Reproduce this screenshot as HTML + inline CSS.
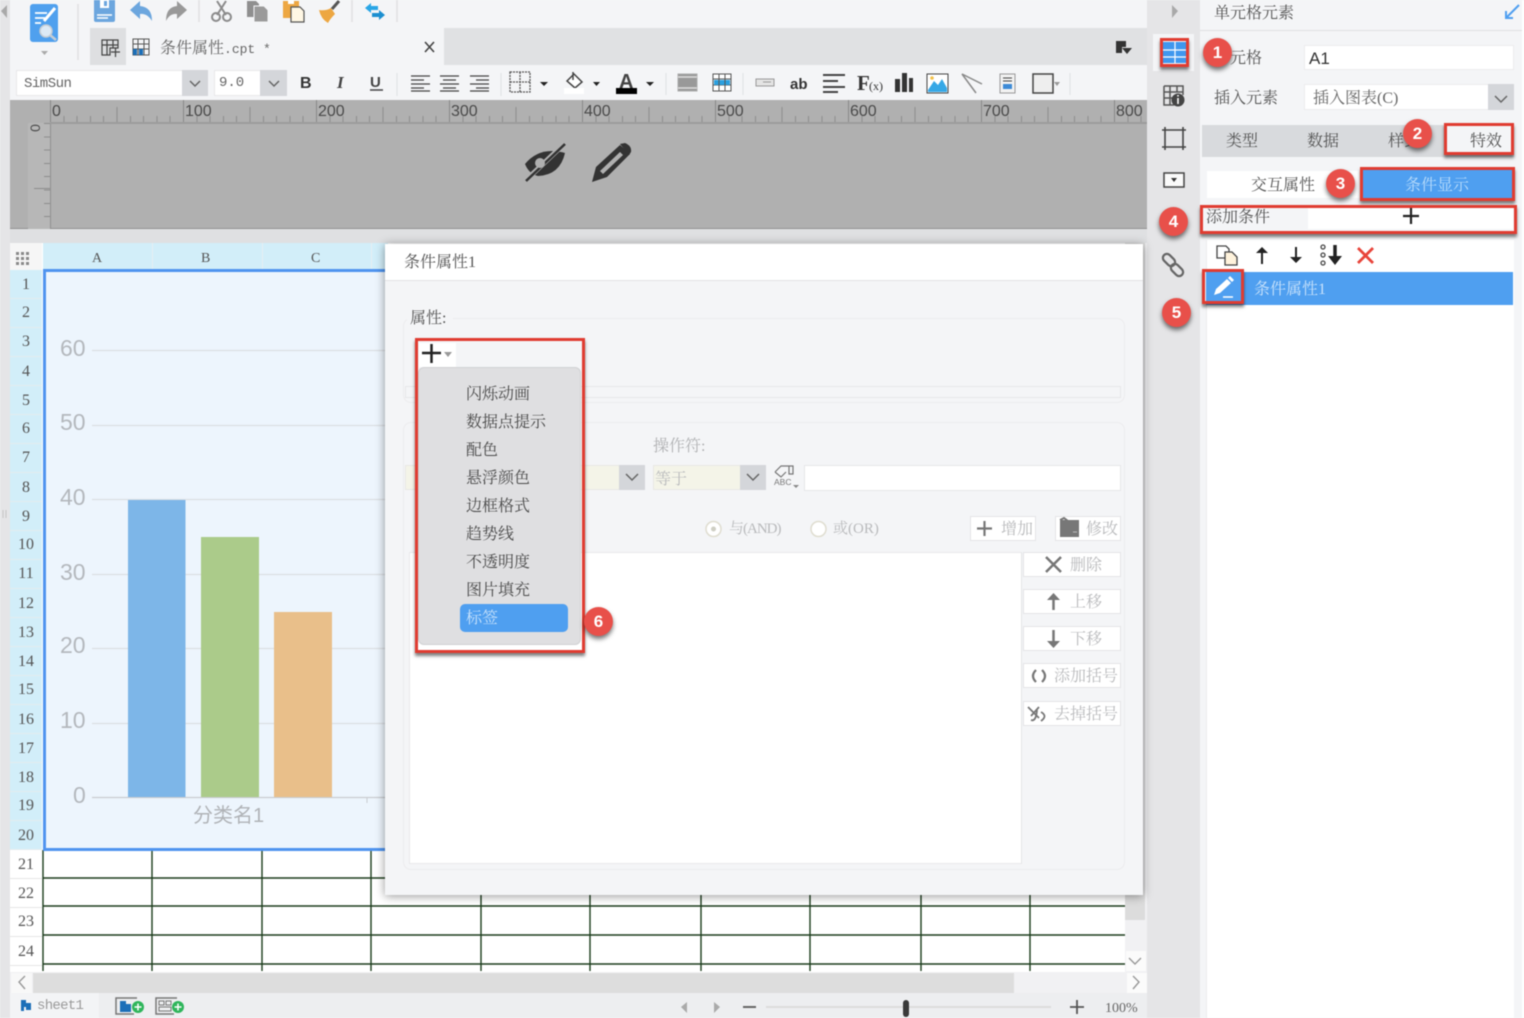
<!DOCTYPE html>
<html lang="zh"><head><meta charset="utf-8"><title>条件属性</title>
<style>
html,body{margin:0;padding:0;background:#f4f5f7;}
#root{position:relative;width:1524px;height:1018px;overflow:hidden;background:#f4f5f7;font-family:"Liberation Serif","Noto Serif CJK SC",serif;color:#555;filter:blur(.45px);}
#root div{position:absolute;box-sizing:border-box;}
.t{white-space:nowrap;line-height:1;font-size:16px;margin-top:2px;}
.m{font-family:"Liberation Mono","Noto Serif CJK SC",monospace;}
.s{font-family:"Liberation Sans",sans-serif;}
.rh{left:10px;width:32px;text-align:center;font-size:16px;line-height:1;color:#555;margin-top:1px;}
.ch{top:250px;font-size:14px;line-height:1;color:#555;margin-top:2px;}
.rl{font-family:"Liberation Sans",sans-serif;font-size:16px;line-height:1;color:#4a4a4a;top:103px;margin-top:1px;}
.yl{left:60px;font-family:"Liberation Sans",sans-serif;font-size:23px;line-height:1;color:#b4b8bd;}
.red{border:3px solid #e03c31;box-shadow:0 3px 3px rgba(0,0,0,.5);}
.bd{width:29px;height:29px;border-radius:50%;background:#e8504a;color:#fff;font:bold 17px/29px "Liberation Sans",sans-serif;text-align:center;box-shadow:0 3px 5px rgba(0,0,0,.55);}
.btn{background:#fff;border:1px solid #e4e4e6;}
.g{color:#b9babc;}
.mi{left:466px;font-size:16px;line-height:1;color:#4a4a4a;white-space:nowrap;margin-top:2px;}
svg{position:absolute;left:0;top:0;}
</style></head><body>
<div id="root">

<!-- left strip -->
<div style="left:0;top:0;width:10px;height:1018px;background:#e5e5e7"></div>

<!-- tab row -->
<div style="left:90px;top:28px;width:1057px;height:37px;background:#e0e1e3"></div>
<div style="left:90px;top:28px;width:36px;height:37px;background:#dedfe1"></div>
<div style="left:126px;top:28px;width:318px;height:37px;background:#f4f5f7"></div>
<div class="t" style="left:160px;top:39px;font-size:16px;color:#666">条件属性<span class="m" style="font-size:13px">.cpt *</span></div>

<!-- format row -->
<div style="left:16px;top:70px;width:192px;height:26px;background:#fff;border:1px solid #e8e8ea"></div>
<div style="left:182px;top:70px;width:26px;height:26px;background:#d4d6da"></div>
<div class="t m" style="left:24px;top:75px;font-size:14px;letter-spacing:-.5px;color:#666">SimSun</div>
<div style="left:214px;top:70px;width:73px;height:26px;background:#fff;border:1px solid #e8e8ea"></div>
<div style="left:260px;top:70px;width:27px;height:26px;background:#d4d6da"></div>
<div class="t m" style="left:219px;top:74px;font-size:14px;color:#666">9.0</div>

<!-- design area -->
<div style="left:10px;top:100px;width:1137px;height:129px;background:#b0b0b0;border-bottom:1px solid #929292"></div>
<div style="left:28px;top:123px;width:22px;height:106px;background:#b7b7b7"></div>
<div style="left:50px;top:100px;width:1px;height:129px;background:#909090"></div>
<div style="left:50px;top:122px;width:1097px;height:2px;background:#9c9c9c"></div>
<div style="left:50px;top:116px;width:1097px;height:6px;background:repeating-linear-gradient(90deg,#8d8d8d 0 1px,transparent 1px 13.3px)"></div>
<div style="left:50px;top:107px;width:1097px;height:15px;background:repeating-linear-gradient(90deg,#8d8d8d 0 1px,transparent 1px 66.5px)"></div>
<div style="left:50px;top:100px;width:1097px;height:22px;background:repeating-linear-gradient(90deg,#888 0 1px,transparent 1px 133px)"></div>
<div style="left:44px;top:123px;width:6px;height:106px;background:repeating-linear-gradient(180deg,#8d8d8d 0 1px,transparent 1px 13.3px)"></div>
<div style="left:34px;top:188px;width:16px;height:1px;background:#8d8d8d"></div>
<div class="rl" style="left:52px">0</div><div class="rl" style="left:185px">100</div><div class="rl" style="left:318px">200</div><div class="rl" style="left:451px">300</div><div class="rl" style="left:584px">400</div><div class="rl" style="left:717px">500</div><div class="rl" style="left:850px">600</div><div class="rl" style="left:983px">700</div><div class="rl" style="left:1116px">800</div>
<div class="t s" style="left:31px;top:119px;font-size:14px;color:#4a4a4a;transform:rotate(-90deg)">0</div>

<div style="left:10px;top:229px;width:1137px;height:14px;background:#dfe0e2"></div>

<!-- sheet -->
<div style="left:10px;top:243px;width:1115px;height:729px;background:#fff"></div>
<div style="left:10px;top:243px;width:32px;height:27px;background:#f6f6f6"></div>
<div style="left:43px;top:243px;width:345px;height:27px;background:#d2eef9"></div>
<div style="left:152px;top:243px;width:1px;height:27px;background:#e6eef2"></div>
<div style="left:262px;top:243px;width:1px;height:27px;background:#e6eef2"></div>
<div style="left:371px;top:243px;width:1px;height:27px;background:#e6eef2"></div>
<div style="left:10px;top:270px;width:32px;height:580px;background:repeating-linear-gradient(180deg,#d2eef9 0 28px,#e4ecef 28px 29px)"></div>
<div style="left:10px;top:850px;width:32px;height:122px;background:repeating-linear-gradient(180deg,#fff 0 28px,#e6e6e6 28px 29px)"></div>
<div class="ch" style="left:92px">A</div><div class="ch" style="left:201px">B</div><div class="ch" style="left:311px">C</div>

<div class="rh" style="top:276px">1</div><div class="rh" style="top:304px">2</div><div class="rh" style="top:333px">3</div><div class="rh" style="top:363px">4</div><div class="rh" style="top:392px">5</div><div class="rh" style="top:420px">6</div><div class="rh" style="top:449px">7</div><div class="rh" style="top:479px">8</div><div class="rh" style="top:508px">9</div><div class="rh" style="top:536px">10</div><div class="rh" style="top:565px">11</div><div class="rh" style="top:595px">12</div><div class="rh" style="top:624px">13</div><div class="rh" style="top:653px">14</div><div class="rh" style="top:681px">15</div><div class="rh" style="top:711px">16</div><div class="rh" style="top:740px">17</div><div class="rh" style="top:769px">18</div><div class="rh" style="top:797px">19</div><div class="rh" style="top:827px">20</div><div class="rh" style="top:856px">21</div><div class="rh" style="top:885px">22</div><div class="rh" style="top:913px">23</div><div class="rh" style="top:943px">24</div>

<!-- grid lines -->
<svg width="1524" height="1018" fill="none" stroke="#1c3c1c" stroke-width="1.400">
<path d="M43 850V971M152 850V971M262 850V971M371 850V971M481 850V971M590 850V971M701 850V971M810 850V971M921 850V971M1030 850V971"/>
<path d="M43 878H1125M43 906H1125M43 935H1125M43 964H1125"/>
<g fill="#8a8a8a" stroke="none"><rect x="16" y="252" width="3" height="3"/><rect x="21" y="252" width="3" height="3"/><rect x="26" y="252" width="3" height="3"/><rect x="16" y="257" width="3" height="3"/><rect x="21" y="257" width="3" height="3"/><rect x="26" y="257" width="3" height="3"/><rect x="16" y="262" width="3" height="3"/><rect x="21" y="262" width="3" height="3"/><rect x="26" y="262" width="3" height="3"/></g>
</svg>

<!-- chart -->
<div style="left:43px;top:269px;width:345px;height:582px;background:#edf5fd;border:3px solid #4f94ef"></div>
<svg width="1524" height="1018">
<path d="M92 350.500H385M92 425.500H385M92 499.500H385M92 574.500H385M92 648.500H385M92 723.500H385" stroke="#dcdfe3" stroke-width="1.200"/>
<path d="M92 797.500H385" stroke="#c9ccd0" stroke-width="1.200"/>
<path d="M367 797V803" stroke="#c9ccd0"/>
<rect x="128" y="500" width="57.500" height="297" fill="#7db6e8"/>
<rect x="201" y="537" width="58" height="260" fill="#abcb8a"/>
<rect x="274" y="612" width="58" height="185" fill="#e9bf8a"/>
</svg>
<div class="yl" style="top:337px">60</div><div class="yl" style="top:411px">50</div><div class="yl" style="top:486px">40</div><div class="yl" style="top:561px">30</div><div class="yl" style="top:634px">20</div><div class="yl" style="top:709px">10</div><div class="yl" style="left:73px;top:784px">0</div>
<div class="t" style="left:193px;top:804px;font-size:20px;font-family:'Liberation Sans','Noto Sans CJK SC',sans-serif;color:#b0b3b7">分类名1</div>

<!-- scrollbars + status -->
<div style="left:1125px;top:243px;width:22px;height:729px;background:#f1f1f3"></div>
<div style="left:1125px;top:243px;width:20px;height:677px;background:#dcdcdc"></div>
<div style="left:1126px;top:951px;width:20px;height:20px;background:#fbfbfb"></div>
<div style="left:10px;top:972px;width:1137px;height:21px;background:#f1f1f3"></div>
<div style="left:33px;top:973px;width:981px;height:20px;background:#dddddd"></div>
<div style="left:11px;top:973px;width:21px;height:20px;background:#f8f8f8"></div>
<div style="left:1127px;top:973px;width:20px;height:20px;background:#fbfbfb"></div>
<div style="left:10px;top:993px;width:1137px;height:25px;background:#edeef0"></div>
<div style="left:10px;top:993px;width:89px;height:25px;background:#f3f4f6"></div>
<div class="t m" style="left:37px;top:997px;font-size:14px;letter-spacing:-.7px;color:#9a9a9a">sheet1</div>
<div class="t" style="left:1105px;top:1000px;font-size:14px;color:#666">100%</div>
<div style="left:766px;top:1006px;width:285px;height:2px;background:#dcdcdc"></div>
<div style="left:903px;top:1000px;width:6px;height:17px;background:#3a3a3a;border-radius:3px"></div>

<!-- right icon strip -->
<div style="left:1147px;top:0;width:53px;height:1018px;background:#e5e5e7"></div>
<div style="left:1153px;top:34px;width:41px;height:37px;background:#f4f5f7"></div>

<!-- right panel -->
<div style="left:1200px;top:0;width:324px;height:1018px;background:#f4f5f7"></div>
<div style="left:1522px;top:0;width:2px;height:1018px;background:#fff"></div>
<div style="left:1200px;top:30px;width:322px;height:1px;background:#dfe0e2"></div>
<div class="t" style="left:1214px;top:4px;color:#555">单元格元素</div>
<div class="t" style="left:1230px;top:49px;color:#555">元格</div>
<div style="left:1304px;top:45px;width:210px;height:25px;background:#fff;border:1px solid #ececee"></div>
<div class="t s" style="left:1309px;top:48px;font-size:17px;color:#333">A1</div>
<div class="t" style="left:1214px;top:89px;color:#555">插入元素</div>
<div style="left:1304px;top:84px;width:210px;height:26px;background:#fff;border:1px solid #ececee"></div>
<div style="left:1488px;top:84px;width:26px;height:26px;background:#d4d6da"></div>
<div class="t" style="left:1313px;top:89px;font-size:16px;color:#666">插入图表(C)</div>
<div style="left:1202px;top:125px;width:312px;height:32px;background:#d8dadd"></div>
<div style="left:1446px;top:126px;width:66px;height:28px;background:#f4f5f7"></div>
<div class="t" style="left:1226px;top:132px;color:#555">类型</div>
<div class="t" style="left:1307px;top:132px;color:#555">数据</div>
<div class="t" style="left:1388px;top:132px;color:#555">样式</div>
<div class="t" style="left:1470px;top:132px;color:#555">特效</div>
<div style="left:1207px;top:171px;width:153px;height:27px;background:#fff"></div>
<div class="t" style="left:1251px;top:176px;color:#555">交互属性</div>
<div style="left:1362px;top:170px;width:151px;height:29px;background:#4f9ff0"></div>
<div class="t" style="left:1405px;top:176px;color:#b9dcfb">条件显示</div>
<div class="t" style="left:1206px;top:208px;color:#555">添加条件</div>
<div style="left:1308px;top:205px;width:205px;height:24px;background:#fff"></div>
<div style="left:1206px;top:240px;width:308px;height:778px;background:#fff;border-left:1px solid #ececee"></div>
<div style="left:1206px;top:272px;width:307px;height:33px;background:#4f9ff0"></div>
<div class="t" style="left:1254px;top:280px;color:#c8e2fb">条件属性1</div>

<div class="red" style="left:1160px;top:38px;width:29px;height:29px"></div>
<div class="red" style="left:1444px;top:123px;width:70px;height:32px"></div>
<div class="red" style="left:1360px;top:167px;width:155px;height:34px"></div>
<div class="red" style="left:1200px;top:205px;width:317px;height:29px"></div>
<div class="red" style="left:1202px;top:269px;width:42px;height:35px"></div>

<!-- dialog -->
<div style="left:385px;top:244px;width:758px;height:651px;background:#f4f5f7;box-shadow:0 1px 9px rgba(0,0,0,.42)"></div>
<div style="left:385px;top:244px;width:758px;height:37px;background:#fff;border-bottom:1px solid #e2e3e5"></div>
<div class="t" style="left:404px;top:253px;color:#555">条件属性1</div>
<div style="left:403px;top:318px;width:722px;height:85px;border:1px solid #ececee;border-radius:8px"></div>
<div style="left:407px;top:309px;width:46px;height:18px;background:#f4f5f7"></div>
<div class="t" style="left:410px;top:309px;color:#555">属性:</div>
<div style="left:405px;top:386px;width:716px;height:12px;border:1px solid #e6e7e9"></div>
<div style="left:403px;top:422px;width:722px;height:448px;border:1px solid #ececee;border-radius:8px"></div>
<div class="t g" style="left:653px;top:437px;color:#b0b1b3">操作符:</div>
<div style="left:405px;top:465px;width:240px;height:25px;background:#f4f4e8;border:1px solid #e8e8e4"></div>
<div style="left:619px;top:465px;width:26px;height:25px;background:#d4d6da"></div>
<div style="left:653px;top:465px;width:113px;height:25px;background:#f4f4e8;border:1px solid #e8e8e4"></div>
<div style="left:740px;top:465px;width:26px;height:25px;background:#d4d6da"></div>
<div class="t g" style="left:655px;top:470px">等于</div>
<div style="left:804px;top:465px;width:317px;height:26px;background:#fff;border:1px solid #e6e7e9"></div>
<div class="t g" style="left:729px;top:520px;font-size:15px;letter-spacing:-1px">与(AND)</div>
<div class="t g" style="left:833px;top:520px;font-size:15px">或(OR)</div>
<div class="btn" style="left:970px;top:516px;width:66px;height:25px"></div>
<div class="t g" style="left:1001px;top:520px;font-size:16px">增加</div>
<div class="btn" style="left:1055px;top:516px;width:66px;height:25px"></div>
<div class="t g" style="left:1086px;top:520px;font-size:16px">修改</div>
<div style="left:409px;top:552px;width:613px;height:312px;background:#fff;border:1px solid #e8e9eb;border-right:1px solid #e4e5e7"></div>
<div class="btn" style="left:1023px;top:552px;width:98px;height:25px"></div><div class="t g" style="left:1070px;top:556px;font-size:16px">删除</div>
<div class="btn" style="left:1023px;top:589px;width:98px;height:25px"></div><div class="t g" style="left:1070px;top:593px;font-size:16px">上移</div>
<div class="btn" style="left:1023px;top:626px;width:98px;height:25px"></div><div class="t g" style="left:1070px;top:630px;font-size:16px">下移</div>
<div class="btn" style="left:1023px;top:663px;width:98px;height:25px"></div><div class="t g" style="left:1054px;top:667px;font-size:16px">添加括号</div>
<div class="btn" style="left:1023px;top:701px;width:98px;height:25px"></div><div class="t g" style="left:1054px;top:705px;font-size:16px">去掉括号</div>

<!-- dropdown -->
<div style="left:419px;top:343px;width:162px;height:24px;background:#f4f5f7"></div>
<div style="left:419px;top:343px;width:37px;height:24px;background:#fff"></div>
<div style="left:418px;top:367px;width:163px;height:278px;background:#dfdfe1;border:1px solid #d0d1d3;border-radius:6px"></div>
<div style="left:460px;top:604px;width:108px;height:28px;background:#4f9ff0;border-radius:5px"></div>
<div class="mi" style="top:385px">闪烁动画</div>
<div class="mi" style="top:413px">数据点提示</div>
<div class="mi" style="top:441px">配色</div>
<div class="mi" style="top:469px">悬浮颜色</div>
<div class="mi" style="top:497px">边框格式</div>
<div class="mi" style="top:525px">趋势线</div>
<div class="mi" style="top:553px">不透明度</div>
<div class="mi" style="top:581px">图片填充</div>
<div class="mi" style="top:609px;color:#c8e2fb">标签</div>
<div class="red" style="left:415px;top:338px;width:170px;height:315px"></div>

<!-- icons -->
<svg width="1524" height="1018" fill="none">
<!-- collapse arrows -->
<path d="M1 11L7 5V18Z" fill="#a9a9a9"/>
<path d="M1172 5L1178 11L1172 18Z" fill="#a9a9a9"/>
<!-- main doc -->
<rect x="30" y="4" width="28" height="38" rx="3" fill="#4fa0ee"/>
<path d="M35 13H47M35 18H45M35 23H41" stroke="#fff" stroke-width="1.800"/>
<path d="M44 21L55 8" stroke="#fff" stroke-width="3"/>
<circle cx="46" cy="31" r="6" fill="#dce9f5" stroke="#c4ccd4" stroke-width="1.500"/>
<path d="M50 35L56 40" stroke="#c4ccd4" stroke-width="2.500"/>
<path d="M41 51H48L44.500 55Z" fill="#aaa"/>
<path d="M78 4V60M199 0V22M352 0V22M397 0V22" stroke="#e0e0e2" stroke-width="1.500"/>
<!-- save -->
<path d="M94 0H115V20Q115 22 113 22H96Q94 22 94 20Z" fill="#6ca6de"/><rect x="100" y="0" width="9" height="8" fill="#fff"/><rect x="104" y="1" width="3" height="5" fill="#6ca6de"/><path d="M97 15H112M97 18H108" stroke="#fff" stroke-width="1.500"/>
<!-- undo / redo -->
<path d="M130 10L140 1V6Q152 7 152 21Q147 13 140 14V19Z" fill="#6ca6de"/>
<path d="M187 10L177 1V6Q166 7 166 21Q170 13 177 14V19Z" fill="#999"/>
<!-- cut -->
<g stroke="#8b8b8b" stroke-width="2"><path d="M217 1L226 15M226 1L217 15"/><circle cx="216" cy="17" r="4"/><circle cx="227" cy="17" r="4"/></g>
<!-- copy -->
<path d="M247 1H256L259 4V17H247Z" fill="#8f8f8f"/><path d="M254 6H264L268 10V22H254Z" fill="#9a9a9a" stroke="#f4f5f7"/>
<!-- paste -->
<path d="M283 1H299V18H283Z" fill="#eda742"/><rect x="288" y="0" width="6" height="4" fill="#fff"/><path d="M291 7H300L304 11V22H291Z" fill="#fff7e4" stroke="#555" stroke-width="1.200"/>
<!-- brush -->
<path d="M319 10Q326 11 331 8L335 14Q330 19 328 23Q321 19 319 10Z" fill="#eda742"/><path d="M332 9L339 1" stroke="#555" stroke-width="3"/>
<!-- swap -->
<path d="M365 8L371 3V6H378V10H371V13Z" fill="#29a6e6"/><path d="M385 15L379 10V13H372V17H379V20Z" fill="#1c8fd0"/>
<!-- tab icons -->
<path d="M102 40H118V48H110V55H102ZM102 45H118M107 40V55M113 40V48" stroke="#444" stroke-width="1.200"/><path d="M111 52H120M115.500 48V57" stroke="#444" stroke-width="1.200"/>
<path d="M133 39H149V55H133ZM133 44H149M133 49H149M138 39V55M144 39V55" stroke="#555" stroke-width="1"/><rect x="133" y="49" width="4" height="6" fill="#1c6fb8"/><rect x="139" y="49" width="4" height="6" fill="#1c6fb8"/>
<path d="M425 42L434 52M434 42L425 52" stroke="#444" stroke-width="1.600"/>
<path d="M1116 41H1126V47H1122V53H1116Z" fill="#333"/><path d="M1122 48H1132L1127 54Z" fill="#333"/>
<!-- combos chevrons -->
<path d="M190 81L195 86L200 81M269 81L274 86L279 81M1495 96L1501 102L1507 96M626 474L632 480L638 474M747 474L753 480L759 474" stroke="#666" stroke-width="1.500"/>
<!-- B I U -->
<text x="300" y="88" font-family="Liberation Sans" font-weight="bold" font-size="16" fill="#333">B</text>
<text x="337" y="88" font-family="Liberation Serif" font-style="italic" font-weight="bold" font-size="17" fill="#444">I</text>
<text x="370" y="87" font-family="Liberation Sans" font-weight="bold" font-size="15" fill="#444">U</text>
<path d="M370 90H383" stroke="#444" stroke-width="1.500"/>
<path d="M397 73V96M501 73V96" stroke="#e0e0e2"/>
<!-- align -->
<path d="M411 76H430M411 80H424M411 84H430M411 88H424M411 91H430" stroke="#444" stroke-width="1.200"/>
<path d="M440 76H459M443 80H456M440 84H459M443 88H456M440 91H459" stroke="#444" stroke-width="1.200"/>
<path d="M470 76H489M476 80H489M470 84H489M476 88H489M470 91H489" stroke="#444" stroke-width="1.200"/>
<!-- border -->
<path d="M510 72H530V92H510ZM510 82H530M520 72V92" stroke="#555" stroke-width="1.300" stroke-dasharray="2 1"/>
<path d="M540 82H548L544 86Z" fill="#222"/>
<!-- fill -->
<path d="M567 81L574 74L582 82L575 88Z" stroke="#444" stroke-width="1.500" fill="#fff"/><path d="M573 72V80" stroke="#444" stroke-width="1.500"/><path d="M564 88H584V94H564Z" fill="#fff"/>
<path d="M593 82H600L596.500 86Z" fill="#222"/>
<!-- A color -->
<text x="619" y="88" font-family="Liberation Sans" font-weight="bold" font-size="20" fill="#444">A</text><rect x="616" y="88" width="21" height="6" fill="#000"/>
<path d="M646 82H654L650 86Z" fill="#222"/>
<path d="M666 73V95M743 73V95M1070 73V95" stroke="#e0e0e2"/>
<!-- merged / grid -->
<rect x="678" y="74" width="19" height="17" fill="#999" stroke="#aaa"/><path d="M678 77H697M678 88H697" stroke="#ddd" stroke-width="1.500"/>
<rect x="713" y="74" width="18" height="17" fill="#fff" stroke="#555"/><path d="M713 79H731M713 85H731" stroke="#555"/><rect x="714" y="80" width="16" height="5" fill="#2ba0e0"/><path d="M719 74V91M725 74V91" stroke="#555"/>
<!-- tb -->
<rect x="756" y="79" width="18" height="7" fill="#e4e4e4" stroke="#999"/><path d="M763 82H771" stroke="#999"/>
<text x="790" y="89" font-family="Liberation Sans" font-weight="bold" font-size="15" fill="#333">ab</text>
<path d="M823 75H845M823 81H838M823 87H845M823 92H838" stroke="#444" stroke-width="2"/>
<text x="857" y="90" font-family="Liberation Serif" font-weight="bold" font-size="21" fill="#333">F</text><text x="869" y="90" font-family="Liberation Serif" font-size="12" fill="#333">(x)</text>
<path d="M895 79H900V92H895ZM902 73H907V92H902ZM909 78H913V92H909Z" fill="#333"/>
<rect x="927" y="74" width="21" height="19" fill="#fff" stroke="#444"/><path d="M928 90L934 81L938 85L942 79L947 88V92H928Z" fill="#36a8e6"/><circle cx="932" cy="78" r="1.800" fill="#f2c14b"/>
<path d="M982 84L962 74L976 93" stroke="#8a8a8a" stroke-width="1.500"/>
<rect x="1000" y="74" width="15" height="19" fill="#f2f2f2" stroke="#999"/><path d="M1003 78H1012M1003 81H1012" stroke="#444"/><rect x="1003" y="84" width="9" height="5" fill="#3d8ad6"/>
<rect x="1033" y="74" width="20" height="19" fill="#eee" stroke="#444" stroke-width="1.500"/><path d="M1054 82H1060L1057 86Z" fill="#999"/>
<!-- eye + pencil -->
<path d="M525 164Q540 146 565 153Q560 175 538 176Q529 174 525 164Z" fill="#333"/><path d="M525 181L565 143" stroke="#b0b0b0" stroke-width="5"/><path d="M526 181L565 144" stroke="#333" stroke-width="2.500"/><circle cx="540" cy="163" r="5" fill="#b0b0b0"/>
<path d="M592 182L596 167L620 145L630 154L607 177Z" fill="#333"/><path d="M620 144L625 143Q632 146 631 152L629 155Z" fill="#333"/><path d="M600 171L620 152L623 155L603 174Z" fill="#b0b0b0"/>
<!-- chart scroll arrows -->
<path d="M25 976L19 982L25 989" stroke="#999" stroke-width="1.400"/>
<path d="M1133 976L1139 982L1133 989" stroke="#999" stroke-width="1.400"/>
<path d="M1129 958L1135 964L1141 958" stroke="#999" stroke-width="1.400"/>
<!-- status icons -->
<path d="M21 1000H26V1003H31V1010H26V1007H24V1011H21Z" fill="#1c6fb8"/>
<path d="M137 998H116V1014H134" stroke="#777" stroke-width="1.500"/><path d="M120 1001H126V1004H131V1012H120Z" fill="#1c6fb8"/><circle cx="138" cy="1007" r="6" fill="#2fb55b"/><path d="M134.500 1007H141.500M138 1003.500V1010.500" stroke="#fff" stroke-width="1.500"/>
<path d="M177 998H156V1014H174" stroke="#777" stroke-width="1.500"/><rect x="159" y="1001" width="5" height="4" stroke="#777"/><rect x="166" y="1001" width="5" height="4" stroke="#777"/><rect x="159" y="1007" width="12" height="4" stroke="#777"/><circle cx="178" cy="1007" r="6" fill="#2fb55b"/><path d="M174.500 1007H181.500M178 1003.500V1010.500" stroke="#fff" stroke-width="1.500"/>
<path d="M687 1002L681 1007L687 1013Z" fill="#aaa"/><path d="M714 1002L720 1007L714 1013Z" fill="#aaa"/>
<path d="M743 1007H756" stroke="#666" stroke-width="2"/><path d="M1070 1007H1084M1077 1000V1014" stroke="#555" stroke-width="1.800"/>
<path d="M3 510V518M6 510V518" stroke="#c4c4c4" stroke-width="1"/>
<!-- right strip icons -->
<rect x="1163" y="42" width="23" height="21" fill="#3f97ee"/><path d="M1163 50H1186M1163 57H1186M1175 42V63" stroke="#fff" stroke-width="1.200"/>
<path d="M1164 86H1183V95M1164 86V105H1174M1164 92H1183M1164 98H1174M1170 86V105M1177 86V92" stroke="#555" stroke-width="1.500"/><circle cx="1178" cy="100" r="6.500" fill="#444"/><path d="M1178 98V104M1178 95V96.500" stroke="#fff" stroke-width="1.600"/>
<path d="M1165 130H1183V147H1165ZM1165 127V150M1183 127V150M1162 130H1186M1162 147H1186" stroke="#444" stroke-width="1.600"/>
<rect x="1164" y="173" width="20" height="14" fill="#fafafa" stroke="#444" stroke-width="1.500"/><path d="M1171 178H1177L1174 182Z" fill="#333"/>
<rect x="1162" y="256" width="14" height="8" rx="4" transform="rotate(45 1169 260)" stroke="#666" stroke-width="2.200"/><rect x="1170" y="266" width="14" height="8" rx="4" transform="rotate(45 1177 270)" stroke="#666" stroke-width="2.200"/>
<!-- blue corner arrow -->
<path d="M1519 5L1507 17M1506 11V18H1513" stroke="#4f9ff0" stroke-width="2"/>
<!-- plus -->
<path d="M1403 216H1419M1411 208V224" stroke="#222" stroke-width="2.200"/>
<path d="M422 353H441M431.500 344V363" stroke="#222" stroke-width="2.500"/><path d="M444 352H452L448 357Z" fill="#999"/>
<!-- right list toolbar -->
<path d="M1217 246H1226L1229 249V258H1217Z" fill="#fff" stroke="#444" stroke-width="1.300"/><path d="M1225 252H1232L1237 257V265H1225Z" fill="#fff3dc" stroke="#444" stroke-width="1.300"/>
<path d="M1262 264V250" stroke="#222" stroke-width="2"/><path d="M1256 253L1262 247L1268 253Z" fill="#222"/>
<path d="M1296 247V260" stroke="#222" stroke-width="2"/><path d="M1290 257L1296 263L1302 257Z" fill="#222"/>
<circle cx="1323" cy="247" r="2" stroke="#444" stroke-width="1.300"/><circle cx="1323" cy="255" r="2" stroke="#444" stroke-width="1.300"/><circle cx="1323" cy="263" r="2" stroke="#444" stroke-width="1.300"/><path d="M1335 245V258" stroke="#222" stroke-width="3.500"/><path d="M1328 256H1342L1335 265Z" fill="#222"/>
<path d="M1358 248L1373 263M1373 248L1358 263" stroke="#e8443a" stroke-width="2.800"/>
<!-- white pencil -->
<path d="M1214 295L1216 289L1227 279L1231 283L1220 293ZM1228 278L1230 276L1234 280L1232 282Z" fill="#fff"/><path d="M1223 297H1233" stroke="#fff" stroke-width="1.500"/>
<!-- abc -->
<path d="M775 472L781 466H793V474H789V466M775 472L781 477L786 472" stroke="#777" stroke-width="1.200"/>
<text x="774" y="485" font-family="Liberation Sans" font-size="8.500" fill="#777">ABC</text><path d="M793 485H799L796 488Z" fill="#888"/>
<!-- radios -->
<circle cx="713.500" cy="529" r="7.500" fill="#fff" stroke="#dfddd0" stroke-width="1.500"/><circle cx="713.500" cy="529" r="2.500" fill="#cfcfc4"/>
<circle cx="818.500" cy="529" r="7.500" fill="#fff" stroke="#dfddd0" stroke-width="1.500"/>
<!-- dialog button icons -->
<path d="M977 528.500H992M984.500 521V536" stroke="#777" stroke-width="2.200"/>
<path d="M1060 520H1079V537H1060Z" fill="#777"/><path d="M1060 520L1064 518L1068 521" stroke="#777" stroke-width="2"/><path d="M1073 532H1077" stroke="#bbb"/>
<path d="M1046 557L1061 572M1061 557L1046 572" stroke="#777" stroke-width="2.500"/>
<path d="M1053.500 610V597" stroke="#777" stroke-width="2.500"/><path d="M1047 600L1053.500 593L1060 600Z" fill="#777"/>
<path d="M1053.500 630V644" stroke="#777" stroke-width="2.500"/><path d="M1047 641L1053.500 648L1060 641Z" fill="#777"/>
<path d="M1036 670Q1030 676 1036 682M1042 670Q1048 676 1042 682" stroke="#777" stroke-width="2.200"/>
<path d="M1028 707L1039 718M1039 707L1031 716M1037 710Q1036 722 1031 720M1041 712Q1048 716 1041 721" stroke="#777" stroke-width="1.800"/>
</svg>

<!-- badges -->
<div class="bd" style="left:1203px;top:38px">1</div>
<div class="bd" style="left:1403px;top:119px">2</div>
<div class="bd" style="left:1326px;top:169px">3</div>
<div class="bd" style="left:1159px;top:207px">4</div>
<div class="bd" style="left:1162px;top:298px">5</div>
<div class="bd" style="left:584px;top:607px">6</div>
</div>
</body></html>
